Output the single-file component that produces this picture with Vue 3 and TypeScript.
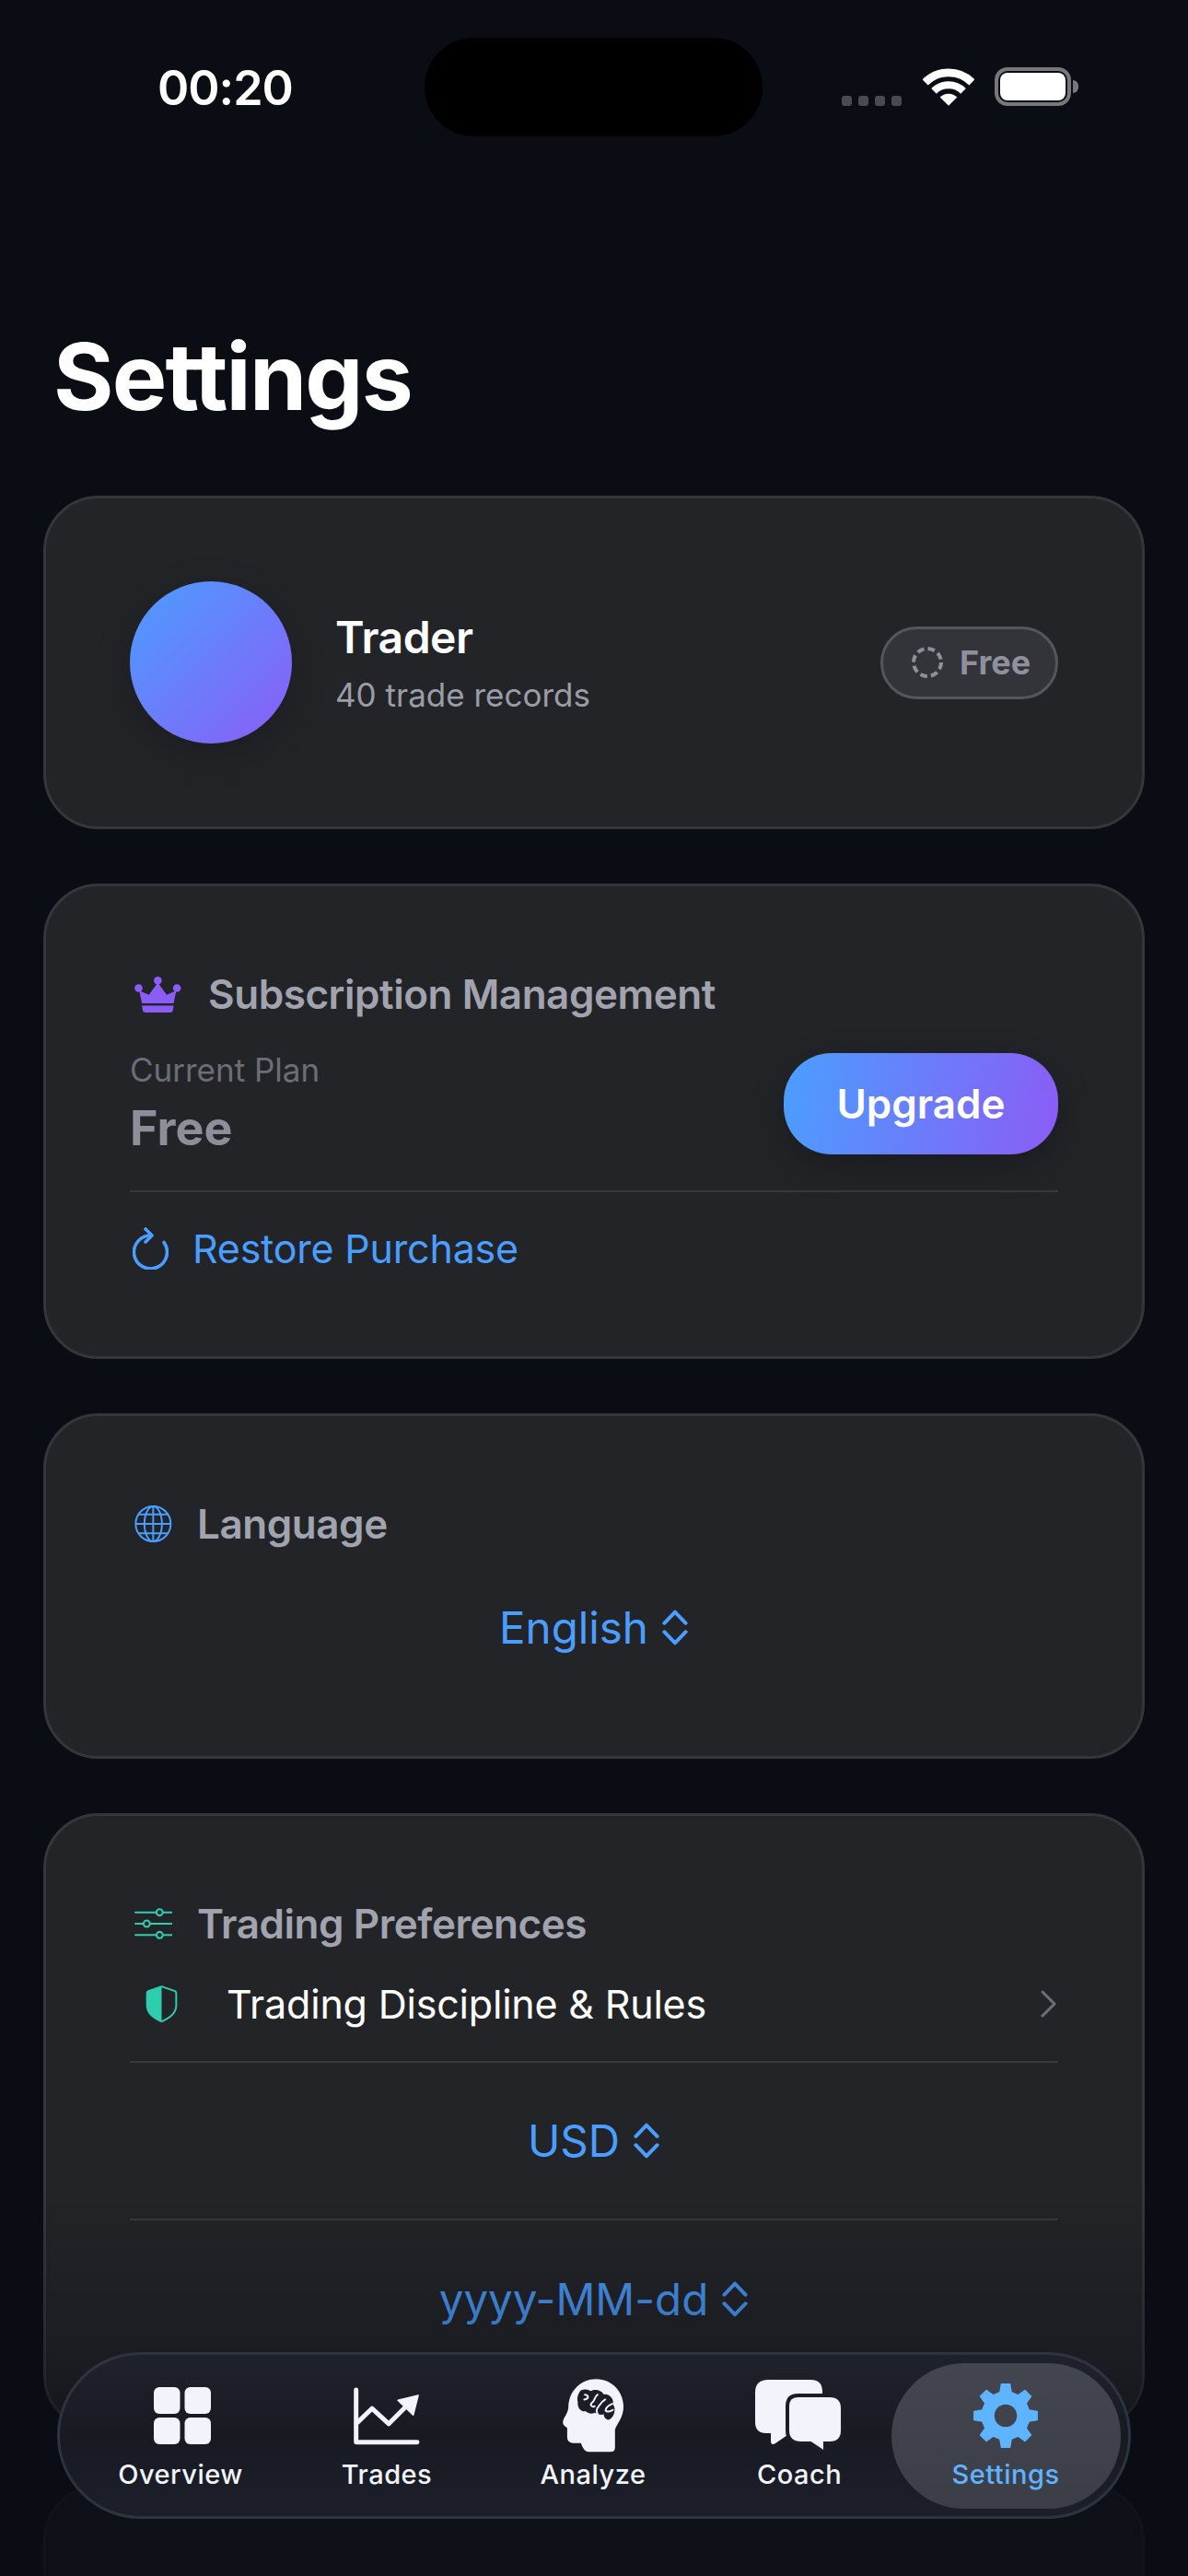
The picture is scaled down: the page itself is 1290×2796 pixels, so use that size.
<template>
  <div class="page">
    <header class="status">
      <span class="time">00:20</span>
      <div class="status-right">
        <div class="signal"><i v-for="n in 4" :key="n"></i></div>
        <svg class="wifi" viewBox="365 100 168 122">
          <path d="M372.6 145.6A108 108 0 0 1 525.4 145.6" fill="none" stroke="#fff" stroke-width="26" />
          <path d="M401 174A68 68 0 0 1 497 174" fill="none" stroke="#fff" stroke-width="24" />
          <path d="M449 222L421 194A40 40 0 0 1 477 194Z" fill="#fff" />
        </svg>
        <div class="battery"><div class="battery-fill"></div></div>
        <i class="battery-cap"></i>
      </div>
    </header>
    <div class="island"></div>

    <h1 class="title">Settings</h1>

    <main class="cards">
      <section class="card">
        <div class="profile">
          <div class="avatar"></div>
          <div class="profile-text">
            <div class="name">Trader</div>
            <div class="records">40 trade records</div>
          </div>
          <div class="badge">
            <svg width="36" height="36" viewBox="0 0 36 36">
              <circle cx="18" cy="18" r="15" fill="none" stroke="#8e919b" stroke-width="4" stroke-dasharray="7.6 4.2" />
            </svg>
            <span>Free</span>
          </div>
        </div>
      </section>

      <section class="card">
        <div class="section-head">
          <svg class="crown" viewBox="78 92 153 118">
            <circle cx="154" cy="105" r="13" fill="#8b5cf6" />
            <circle cx="91" cy="130" r="13" fill="#8b5cf6" />
            <circle cx="217" cy="130" r="13" fill="#8b5cf6" />
            <path d="M93 138L125 152L154 112L183 152L215 138L206 180H102Z" fill="#8b5cf6" />
            <path d="M102 187H206L204 201Q203 210 194 210H114Q105 210 104 201Z" fill="#8b5cf6" />
          </svg>
          <span class="section-title">Subscription Management</span>
        </div>
        <div class="plan-row">
          <div class="plan-text">
            <div class="plan-label">Current Plan</div>
            <div class="plan-name">Free</div>
          </div>
          <button class="upgrade">Upgrade</button>
        </div>
        <div class="restore">
          <svg class="restore-icon" viewBox="0 0 39 46">
            <path d="M20 9A18 18 0 1 0 34 16.4" fill="none" stroke="#4a9eff" stroke-width="3.6" stroke-linecap="round" />
            <path d="M14 2L21 9L14 16" fill="none" stroke="#4a9eff" stroke-width="3.6" stroke-linecap="round" stroke-linejoin="round" />
          </svg>
          <span>Restore Purchase</span>
        </div>
      </section>

      <section class="card tight">
        <div class="section-head">
          <svg class="head-icon" viewBox="45 38 123 122">
            <g fill="none" stroke="#4a9eff" stroke-width="6">
              <circle cx="106" cy="99" r="58" />
              <ellipse cx="106" cy="99" rx="29" ry="58" />
              <path d="M106 41V157M48 99H164M57 68H155M57 130H155" />
            </g>
          </svg>
          <span class="section-title">Language</span>
        </div>
        <div class="picker">
          <span>English</span>
          <svg class="updown" viewBox="0 0 26 37" preserveAspectRatio="none">
            <path d="M3 14L13 2.500L23 14M3 23L13 34.500L23 23" fill="none" stroke="#4a9eff" stroke-width="3.600" stroke-linecap="round" stroke-linejoin="round" />
          </svg>
        </div>
      </section>

      <section class="card tight">
        <div class="section-head">
          <svg class="head-icon" viewBox="48 28 120 104">
            <g fill="none" stroke="#2fcdb0" stroke-width="6" stroke-linecap="round">
              <path d="M51 44H168M51 80H168M51 116H168" />
              <g fill="#232428">
                <circle cx="128" cy="44" r="10" />
                <circle cx="87" cy="80" r="10" />
                <circle cx="128" cy="116" r="10" />
              </g>
            </g>
          </svg>
          <span class="section-title">Trading Preferences</span>
        </div>
        <div class="link-row">
          <svg class="shield" viewBox="85 282 106 126">
            <path d="M138 288L182 303Q186 305 186 311V350Q186 382 138 403Q90 382 90 350V311Q90 305 94 303Z" fill="none" stroke="#2fcdb0" stroke-width="6" stroke-linejoin="round" />
            <path d="M138 288V403Q90 382 90 350V311Q90 305 94 303Z" fill="#2fcdb0" />
          </svg>
          <span class="link-text">Trading Discipline &amp; Rules</span>
          <svg class="chevron" viewBox="0 0 17 30">
            <path d="M2 2L15 15L2 28" fill="none" stroke="#6c6f77" stroke-width="3" stroke-linecap="round" stroke-linejoin="round" />
          </svg>
        </div>
        <div class="picker ruled">
          <span>USD</span>
          <svg class="updown" viewBox="0 0 26 37" preserveAspectRatio="none">
            <path d="M3 14L13 2.500L23 14M3 23L13 34.500L23 23" fill="none" stroke="#4a9eff" stroke-width="3.600" stroke-linecap="round" stroke-linejoin="round" />
          </svg>
        </div>
        <div class="picker">
          <span>yyyy-MM-dd</span>
          <svg class="updown" viewBox="0 0 26 37" preserveAspectRatio="none">
            <path d="M3 14L13 2.500L23 14M3 23L13 34.500L23 23" fill="none" stroke="#4a9eff" stroke-width="3.600" stroke-linecap="round" stroke-linejoin="round" />
          </svg>
        </div>
      </section>

      <section class="card empty"></section>
    </main>

    <div class="fade"></div>

    <nav class="tabbar">
      <div v-for="tab in tabs" :key="tab.label" :class="['tab', { active: tab.active }]">
        <div class="tab-icon">
          <svg v-if="tab.icon === 'grid'" class="grid-icon" width="62" height="62" viewBox="0 0 62 62">
            <rect x="0" y="0" width="28.500" height="29" rx="6" fill="#f1f4fb" />
            <rect x="33.500" y="0" width="28.500" height="29" rx="6" fill="#f1f4fb" />
            <rect x="0" y="33" width="28.500" height="29" rx="6" fill="#f1f4fb" />
            <rect x="33.500" y="33" width="28.500" height="29" rx="6" fill="#f1f4fb" />
          </svg>
          <svg v-else-if="tab.icon === 'chart'" width="73" height="63" viewBox="45 35 220 190">
            <path d="M53 44V215H253" fill="none" stroke="#f1f4fb" stroke-width="15" stroke-linecap="round" stroke-linejoin="round" />
            <path d="M58 150L105 105L160 155L215 100" fill="none" stroke="#f1f4fb" stroke-width="15" stroke-linecap="round" stroke-linejoin="round" />
            <path d="M256 62L240 126L190 78Z" fill="#f1f4fb" stroke="#f1f4fb" stroke-width="5" stroke-linejoin="round" />
          </svg>
          <svg v-else-if="tab.icon === 'brain'" width="68" height="80" viewBox="33 24 204 242">
            <path d="M145 25C200 25 235 70 235 115C235 150 215 170 207 190V250Q207 264 192 264H120Q105 264 95 235H68Q50 232 50 215V185Q35 178 36 165C38 150 52 140 54 118C54 65 95 25 145 25Z" fill="#f1f4fb" />
            <path d="M95 62C110 55 120 60 128 64C140 55 165 62 170 75C190 72 205 92 200 108C212 120 205 150 188 158C178 160 170 150 170 140C160 145 150 138 140 135C130 142 115 135 110 130C95 135 82 118 85 100C80 88 88 68 95 62Z" fill="#1b1e27" />
            <path d="M108 76C122 76 122 90 106 92M150 76C138 84 142 96 130 104C124 110 132 118 140 114M175 92C160 100 156 112 148 122C144 130 148 136 150 140M198 106C184 112 176 120 176 128C182 136 192 130 200 126" fill="none" stroke="#f1f4fb" stroke-width="6" stroke-linecap="round" />
          </svg>
          <svg v-else-if="tab.icon === 'chat'" width="96" height="78" viewBox="0 0 96 78">
            <path d="M14 0H60Q73 0 73 13V58H38L22 69Q17 72 17 66V58H12Q0 58 0 46V14Q0 0 14 0Z" fill="#f1f4fb" />
            <path d="M46 17H81Q95 17 95 31V55Q95 69 81 69H76V76Q76 79 72 77L60 69H50Q35 69 35 55V29Q35 17 46 17Z" fill="#f1f4fb" stroke="#1b1e27" stroke-width="4" />
          </svg>
          <svg v-else width="72" height="72" viewBox="-36 -36 72 72">
            <path :d="gearPath" fill="#5fb4ff" stroke="#5fb4ff" stroke-width="1.500" stroke-linejoin="round" fill-rule="evenodd" />
          </svg>
        </div>
        <span class="tab-label">{{ tab.label }}</span>
      </div>
    </nav>
  </div>
</template>

<script setup lang="ts">
interface Tab {
  label: string
  icon: string
  active?: boolean
}

const tabs: Tab[] = [
  { label: 'Overview', icon: 'grid' },
  { label: 'Trades', icon: 'chart' },
  { label: 'Analyze', icon: 'brain' },
  { label: 'Coach', icon: 'chat' },
  { label: 'Settings', icon: 'gear', active: true }
]

// 8 teeth, rounded enough at this size with a small bevel on each tooth
function buildGear(): string {
  const teeth = 8
  const outer = 34.5
  const root = 26
  let d = ''
  for (let i = 0; i < teeth; i++) {
    const a = (i / teeth) * Math.PI * 2 - Math.PI / 2
    const step = (Math.PI * 2) / teeth
    const pts: [number, number][] = [
      [root, a - step * 0.3],
      [outer, a - step * 0.17],
      [outer, a + step * 0.17],
      [root, a + step * 0.3]
    ]
    for (const [r, t] of pts) {
      const x = (r * Math.cos(t)).toFixed(2)
      const y = (r * Math.sin(t)).toFixed(2)
      d += (d ? 'L' : 'M') + x + ' ' + y
    }
  }
  d += 'Z M13 0A13 13 0 1 0 -13 0A13 13 0 1 0 13 0Z'
  return d
}

const gearPath = buildGear()
</script>

<style>
html, body {
  margin: 0;
  background: #0a0d14;
}
</style>

<style scoped>
.page {
  position: relative;
  width: 1290px;
  height: 2796px;
  overflow: hidden;
  background: #0a0d14;
  font-family: Inter, "Liberation Sans", sans-serif;
  color: #fff;
}
.status {
  height: 190px;
  box-sizing: border-box;
  padding: 64px 119px 0 171px;
  display: flex;
  justify-content: space-between;
  align-items: flex-start;
}
.time {
  font-size: 52px;
  line-height: 63px;
  font-weight: 600;
  letter-spacing: -1px;
}
.status-right {
  display: flex;
  align-items: flex-end;
  height: 42px;
  margin-top: 9px;
}
.signal {
  display: flex;
  gap: 7px;
  margin-right: 23px;
}
.signal i {
  width: 11px;
  height: 11px;
  border-radius: 3px;
  background: #4a4b50;
}
.wifi {
  width: 56px;
  height: 41px;
  margin-right: 22px;
}
.battery {
  width: 83px;
  height: 42px;
  box-sizing: border-box;
  border: 4px solid #77787d;
  border-radius: 14px;
  padding: 2px;
}
.battery-fill {
  height: 100%;
  background: #fff;
  border-radius: 8px;
}
.battery-cap {
  width: 6px;
  height: 14px;
  margin: 0 0 14px 2px;
  background: #77787d;
  border-radius: 0 6px 6px 0;
}
.island {
  position: absolute;
  left: 461px;
  top: 41px;
  width: 367px;
  height: 107px;
  border-radius: 54px;
  background: #000;
}
.title {
  margin: 159px 0 69px 58px;
  font-size: 100px;
  line-height: 120px;
  font-weight: 700;
  letter-spacing: -1.8px;
}
.cards {
  display: flex;
  flex-direction: column;
  gap: 59px;
  padding: 0 47px;
}
.card {
  border: 3px solid #35363a;
  border-radius: 60px;
  background: #232428;
  padding: 90px 91px;
}
.card.tight {
  padding-bottom: 55px;
}
.card.empty {
  height: 500px;
}
.profile {
  display: flex;
  align-items: center;
}
.avatar {
  width: 176px;
  height: 176px;
  border-radius: 50%;
  background: linear-gradient(135deg, #4a9eff, #8b5cf6);
  box-shadow: 0 12px 40px rgba(0, 0, 0, 0.2);
}
.profile-text {
  margin-left: 47px;
  flex: 1;
}
.name {
  font-size: 48px;
  line-height: 60px;
  font-weight: 600;
  letter-spacing: -0.5px;
}
.records {
  margin-top: 10px;
  font-size: 35px;
  line-height: 44px;
  color: #9a9ca6;
}
.badge {
  display: flex;
  align-items: center;
  gap: 17px;
  width: 193px;
  height: 79px;
  box-sizing: border-box;
  padding-left: 30px;
  border: 3px solid #55565c;
  border-radius: 40px;
  background: #333439;
  color: #8e919b;
  font-size: 36px;
  font-weight: 700;
}
.section-head {
  display: flex;
  align-items: center;
  height: 54px;
  margin-left: 5px;
}
.crown {
  width: 51px;
  height: 39px;
  margin-right: 29px;
}
.head-icon {
  width: 41px;
  height: 40px;
  margin-right: 27px;
}
.section-title {
  font-size: 44px;
  font-weight: 600;
  color: #a1a4af;
  letter-spacing: -0.45px;
}
.plan-row {
  display: flex;
  justify-content: space-between;
  align-items: center;
  margin-top: 33px;
  padding-bottom: 35px;
  border-bottom: 2px solid #38393d;
}
.plan-label {
  font-size: 35px;
  line-height: 44px;
  color: #6b6e76;
}
.plan-name {
  margin-top: 10px;
  font-size: 52px;
  line-height: 64px;
  font-weight: 700;
  color: #8c8f99;
}
.upgrade {
  width: 298px;
  height: 110px;
  border: none;
  border-radius: 52px;
  background: linear-gradient(100deg, #4a9eff, #8b5cf6);
  color: #fff;
  font: 600 44px Inter, "Liberation Sans", sans-serif;
  box-shadow: 0 12px 36px rgba(0, 0, 0, 0.25);
}
.restore {
  display: flex;
  align-items: center;
  height: 54px;
  margin-top: 34px;
  color: #4a9eff;
  font-size: 43px;
  letter-spacing: -0.2px;
}
.restore-icon {
  width: 39px;
  height: 46px;
  margin: 0 26px 0 3px;
}
.picker {
  display: flex;
  justify-content: center;
  align-items: center;
  gap: 14px;
  height: 170px;
  color: #4a9eff;
  font-size: 47.5px;
}
.picker.ruled {
  height: 169px;
  border-bottom: 2px solid #38393d;
}
.updown {
  width: 30px;
  height: 39px;
}
.link-row {
  display: flex;
  align-items: center;
  height: 119px;
  padding-bottom: 3px;
  border-bottom: 2px solid #38393d;
  font-size: 43px;
  letter-spacing: -0.2px;
}
.shield {
  width: 35px;
  height: 42px;
  margin: 0 53px 0 17px;
}
.link-text {
  flex: 1;
}
.chevron {
  width: 17px;
  height: 30px;
  margin-right: 2px;
}
.fade {
  position: absolute;
  left: 0;
  right: 0;
  bottom: 0;
  height: 420px;
  background: linear-gradient(to bottom, rgba(10, 13, 20, 0), rgba(10, 13, 20, 0.35) 45%, rgba(10, 13, 20, 0.85) 75%);
}
.tabbar {
  position: absolute;
  left: 62px;
  top: 2553px;
  width: 1166px;
  height: 181px;
  box-sizing: border-box;
  padding: 0 21px 0 19px;
  display: flex;
  align-items: stretch;
  border: 3px solid #2e3340;
  border-radius: 91px;
  background: linear-gradient(to bottom, #1f222c, #181a22 50%, #1c1f29);
}
.tab {
  position: relative;
  flex: 1;
  display: flex;
  flex-direction: column;
  align-items: center;
}
.tab.active::before {
  content: '';
  position: absolute;
  left: -12px;
  right: -13px;
  top: 9px;
  height: 158px;
  border-radius: 79px;
  background: linear-gradient(to bottom, #44464f, #3c3e47);
}
.tab-icon {
  position: relative;
  height: 80px;
  margin-top: 26px;
  display: flex;
  align-items: center;
  justify-content: center;
}
.grid-icon {
  margin-left: 3px;
}
.tab-label {
  position: relative;
  margin-top: 4px;
  font-size: 29px;
  line-height: 40px;
  font-weight: 500;
  color: #f1f4fb;
  letter-spacing: 0.5px;
}
.tab.active .tab-label {
  color: #5fb4ff;
}
</style>
